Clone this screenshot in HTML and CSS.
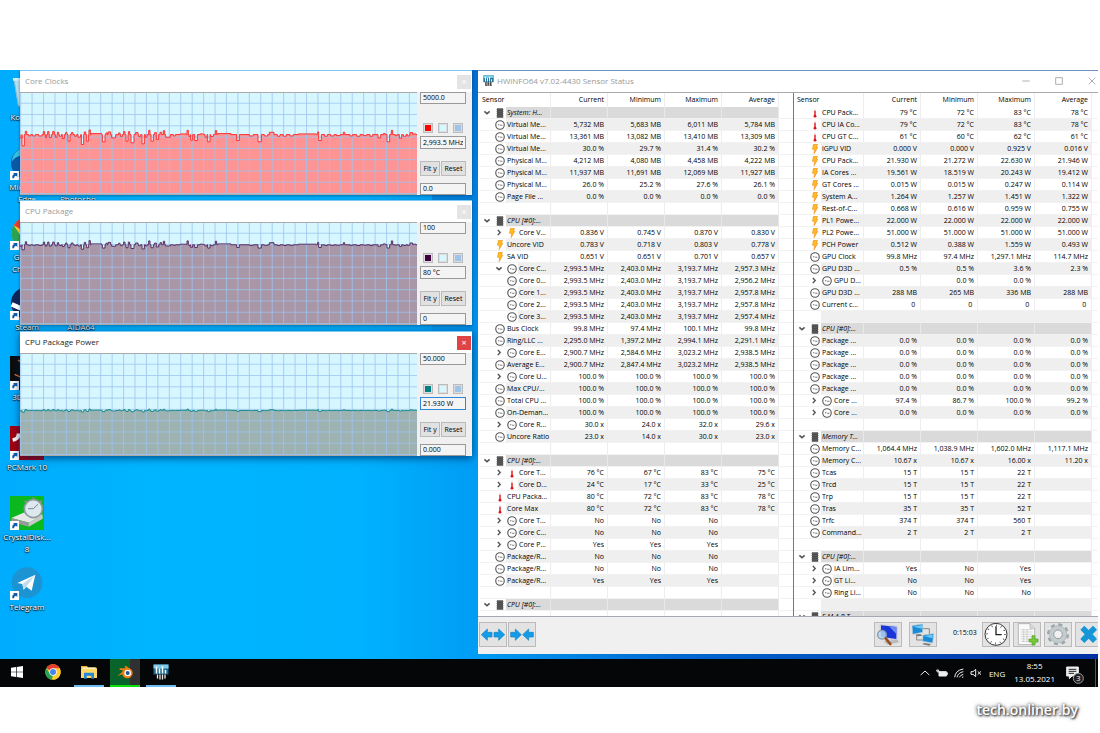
FILE: index.html
```html
<!DOCTYPE html>
<html lang="en">
<head>
  <meta charset="UTF-8">
  <title>HWiNFO64 Sensor Status</title>
  <link rel="stylesheet" href="styles.css">
</head>
<body>
  <!-- shared icons -->
  <svg class="symbols" aria-hidden="true">
    <symbol id="clock" viewBox="0 0 27 27"><circle cx="13.500" cy="13.500" r="11.500" fill="#fff" stroke="#555" stroke-width="3"/><path d="M8 13h4M14 14h6" stroke="#777" stroke-width="3"/></symbol>
    <symbol id="chip" viewBox="0 0 24 30"><path d="M3 1h18v28H3z" fill="#4a4a4a"/><path d="M1 4h22M1 10h22M1 16h22M1 22h22M1 27h22" stroke="#666" stroke-width="2"/></symbol>
    <symbol id="bolt" viewBox="0 0 20 32"><path d="M5 1h13l-4 9h5L7 31l2-14H2z" fill="#ffbe1a" stroke="#f08a1c" stroke-width="2"/></symbol>
    <symbol id="temp" viewBox="0 0 12 32"><path d="M4 2h4v20H4z" fill="#ddd"/><path d="M4 9h4v14H4z" fill="#e00"/><circle cx="6" cy="26" r="4.500" fill="#d11"/></symbol>
    <symbol id="open" viewBox="0 0 24 24"><path d="M3 8l9 8 9-8" fill="none" stroke="#555" stroke-width="5"/></symbol>
    <symbol id="closed" viewBox="0 0 24 24"><path d="M8 3l8 9-8 9" fill="none" stroke="#555" stroke-width="5"/></symbol>
    <symbol id="hwinfo" viewBox="0 0 32 32"><path d="M1 1h30v20H1z" fill="#1a6a94"/><path d="M1 1h30v8H1z" fill="#7fcbe6"/><path d="M7 5v14M13 9v10M19 5v14M25 12v7" stroke="#fff" stroke-width="3"/><path d="M6 21h20v10H6z" fill="#111"/><path d="M9 21v8M14 21v10M19 21v10M24 21v8" stroke="#eee" stroke-width="2.500"/></symbol>
    <symbol id="shortcut" viewBox="0 0 27 27"><path d="M0 0h27v27H0z" fill="#fff"/><path d="M7 22v-6q0-6 6-6l-4-4h13v12l-4-4q-6 0-6 8z" fill="#0a5bb0"/></symbol>
    <symbol id="chromeball" viewBox="0 0 48 48"><circle cx="24" cy="24" r="23" fill="#fc3"/><path d="M24 24L4 12.500A23 23 0 0 1 44 12.500z" fill="#e63e30"/><path d="M4 12.500L15 29l9 5-4 13A23 23 0 0 1 4 12.500z" fill="#2aa44f"/><path d="M24 13h20a23 23 0 0 1-20 34l10-18z" fill="#fc3"/><circle cx="24" cy="24" r="11" fill="#fff"/><circle cx="24" cy="24" r="9" fill="#4286f4"/></symbol>
  </svg>

  <main class="desktop">
    <div class="wallpaper">
      <div class="shortcuts">
        <div class="shortcut">
          <svg viewBox="0 0 102 102"><path d="M12 10h74l-11 80H25z" fill="#b4e0f0" stroke="#8bbccb" stroke-width="3"/><path d="M9 6h80v8H9z" fill="#d5edf5"/><path d="M38 65l12-20 14 20zM42 72h24" fill="#1677c7" stroke="#1677c7" stroke-width="5"/></svg>
          <span>Корзина</span>
        </div>
        <div></div>
        <div class="shortcut">
          <svg viewBox="0 0 102 102"><circle cx="51" cy="51" r="48" fill="#0a59a8"/><path d="M5 48C8 16 34 2 53 3c30 0 50 28 45 50-8 18-40 12-33 0 5-15-8-27-22-25C25 28 10 38 5 48z" fill="#35c1dc"/><use href="#shortcut" y="75" width="27" height="27"/></svg>
          <span>Microsoft Edge</span>
        </div>
        <div class="shortcut">
          <svg viewBox="0 0 102 102"><path d="M3 3h96v96H3z" fill="#001e36"/></svg>
          <span><br>Photosho...</span>
        </div>
        <div class="shortcut">
          <svg viewBox="0 0 102 102"><use href="#chromeball" x="3" y="3" width="96" height="96"/><use href="#shortcut" y="75" width="27" height="27"/></svg>
          <span>Google Chrome</span>
        </div>
        <div></div>
        <div class="shortcut">
          <svg viewBox="0 0 102 102"><circle cx="51" cy="51" r="48" fill="#102455"/><path d="M5 55l35 15 25-30" fill="none" stroke="#fff" stroke-width="14"/><use href="#shortcut" y="75" width="27" height="27"/></svg>
          <span>Steam</span>
        </div>
        <div class="shortcut">
          <svg viewBox="0 0 102 102"><path d="M3 3h96v96H3z" fill="#d33"/></svg>
          <span>AIDA64</span>
        </div>
        <div class="shortcut">
          <svg viewBox="0 0 102 102"><path d="M0 0h102v102H0z" fill="#0c0c0c"/><path d="M24 12l12 9 20-12M14 55l25 12 30-25" fill="none" stroke="#e8762b" stroke-width="4"/><use href="#shortcut" y="75" width="27" height="27"/></svg>
          <span>3DMark</span>
        </div>
        <div></div>
        <div class="shortcut">
          <svg viewBox="0 0 102 102"><path d="M0 0h102v102H0z" fill="#a3000f"/><path d="M8 42q16-3 17-14h10v50" fill="none" stroke="#fff" stroke-width="11"/><use href="#shortcut" y="75" width="27" height="27"/></svg>
          <span>PCMark 10</span>
        </div>
        <div></div>
        <div class="shortcut">
          <svg viewBox="0 0 102 102"><path d="M0 0h102v102H0z" fill="#0bb81e"/><path d="M4 66l42-18 52 8-40 24z" fill="#e8e8e8"/><path d="M4 66v12l52 14V80z" fill="#999"/><path d="M56 80v12l42-24V56z" fill="#c9c9c9"/><path d="M70 4v8M44 14l7 6M96 14l-7 6" stroke="#888" stroke-width="6"/><circle cx="70" cy="38" r="27" fill="#dce8ec" stroke="#8d999e" stroke-width="5"/><path d="M70 38l14-13M54 38h16" stroke="#789" stroke-width="3"/><use href="#shortcut" y="75" width="27" height="27"/></svg>
          <span>CrystalDisk... 8</span>
        </div>
        <div></div>
        <div class="shortcut">
          <svg viewBox="0 0 102 102"><circle cx="51" cy="50" r="46" fill="#1c93d2"/><path d="M22 51l54-25-11 48-16-12-8 9-4-17z" fill="#fff"/><path d="M37 54l39-28-27 36-8 9z" fill="#c3dcec"/><use href="#shortcut" y="75" width="27" height="27"/></svg>
          <span>Telegram</span>
        </div>
      </div>

      <!-- graph windows -->
      <section class="graph-window first">
        <header><h2>Core Clocks</h2><button class="close" aria-label="Close">×</button></header>
        <div class="graph-body">
          <svg class="graph" data-graph="clocks" viewBox="0 0 1191 306" preserveAspectRatio="none"></svg>
          <div class="graph-side">
            <input class="limit" aria-label="Maximum" value="5000.0">
            <div class="swatches"><button class="swatch red" aria-label="Line color"></button><button class="swatch pale" aria-label="Background color"></button><button class="swatch grid" aria-label="Grid color"></button></div>
            <input class="value" aria-label="Current value" value="2,993.5 MHz">
            <div class="side-buttons"><button>Fit y</button><button>Reset</button></div>
            <input class="limit" aria-label="Minimum" value="0.0">
          </div>
        </div>
      </section>
      <section class="graph-window second">
        <header><h2>CPU Package</h2><button class="close" aria-label="Close">×</button></header>
        <div class="graph-body">
          <svg class="graph" data-graph="package" viewBox="0 0 1191 306" preserveAspectRatio="none"></svg>
          <div class="graph-side">
            <input class="limit" aria-label="Maximum" value="100">
            <div class="swatches"><button class="swatch plum" aria-label="Line color"></button><button class="swatch pale" aria-label="Background color"></button><button class="swatch grid" aria-label="Grid color"></button></div>
            <input class="value" aria-label="Current value" value="80 °C">
            <div class="side-buttons"><button>Fit y</button><button>Reset</button></div>
            <input class="limit" aria-label="Minimum" value="0">
          </div>
        </div>
      </section>
      <section class="graph-window third active">
        <header><h2>CPU Package Power</h2><button class="close" aria-label="Close">×</button></header>
        <div class="graph-body">
          <svg class="graph" data-graph="power" viewBox="0 0 1191 306" preserveAspectRatio="none"></svg>
          <div class="graph-side">
            <input class="limit" aria-label="Maximum" value="50.000">
            <div class="swatches"><button class="swatch teal" aria-label="Line color"></button><button class="swatch pale" aria-label="Background color"></button><button class="swatch grid" aria-label="Grid color"></button></div>
            <input class="value" aria-label="Current value" value="21.930 W">
            <div class="side-buttons"><button>Fit y</button><button>Reset</button></div>
            <input class="limit" aria-label="Minimum" value="0.000">
          </div>
        </div>
      </section>

      <!-- sensors -->
      <section class="sensor-window">
        <header class="sensor-title">
          <svg class="app-icon"><use href="#hwinfo"/></svg>
          <h1>HWiNFO64 v7.02-4430 Sensor Status</h1>
          <div class="window-buttons">
            <button aria-label="Minimize"><svg viewBox="0 0 24 24"><path d="M1 12h22"/></svg></button>
            <button aria-label="Maximize"><svg viewBox="0 0 24 24"><path d="M2 2h20v20H2z"/></svg></button>
            <button aria-label="Close"><svg viewBox="0 0 24 24"><path d="M2 2l20 20M22 2L2 22"/></svg></button>
          </div>
        </header>
        <div class="panes">
          <div class="pane left-pane">
            <table>
              <colgroup><col class="name-col"><col class="num-col"><col class="num-col"><col class="num-col"><col class="num-col"><col></colgroup>
              <thead><tr><th>Sensor</th><th>Current</th><th>Minimum</th><th>Maximum</th><th>Average</th><td></td></tr></thead>
              <tbody id="left"></tbody>
            </table>
          </div>
          <div class="pane right-pane">
            <table>
              <colgroup><col class="name-col"><col class="num-col"><col class="num-col"><col class="num-col"><col class="num-col"><col></colgroup>
              <thead><tr><th>Sensor</th><th>Current</th><th>Minimum</th><th>Maximum</th><th>Average</th><td></td></tr></thead>
              <tbody id="right"></tbody>
            </table>
          </div>
        </div>
        <footer class="toolbar">
          <button aria-label="Expand columns"><svg viewBox="0 0 78 69"><path d="M4 35l18-17v10h14v14H22v10zM74 35L56 18v10H42v14h14v10z" fill="#159ce8" stroke="#1283c4" stroke-width="2"/></svg></button>
          <button aria-label="Shrink columns"><svg viewBox="0 0 78 69"><path d="M37 35L19 18v10H5v14h14v10zM41 35l18-17v10h14v14H59v10z" fill="#159ce8" stroke="#1283c4" stroke-width="2"/></svg></button>
          <div class="tools">
            <button aria-label="Summary"><svg viewBox="0 0 78 69"><path d="M14 3l54 5v46l-54-9z" fill="#ccd"/><path d="M18 7l46 5v36l-46-7z" fill="#1937d8"/><path d="M42 10l22 3v20z" fill="#6e8cf5"/><path d="M25 54l42-4 6 8-36 7z" fill="#bbb"/><circle cx="21" cy="35" r="13" fill="#b5d8f5" fill-opacity=".85" stroke="#8498ab" stroke-width="4"/><path d="M32 46l14 17" stroke="#9a4d20" stroke-width="8" stroke-linecap="round"/></svg></button>
            <button class="network" aria-label="Network"><svg viewBox="0 0 78 69"><path d="M34 17h24v18M20 35v16h22" fill="none" stroke="#888" stroke-width="3"/><path d="M6 8l32-5v25L8 34zM39 36l32-4-3 28-30-5z" fill="#168bd8" stroke="#b9c8d4" stroke-width="2"/><path d="M10 11l26-5v11zM42 39l26-4-1 11z" fill="#70c8f5"/><path d="M16 35l15-2 6 5-14 2zM41 60l22 3-5 5-20-4z" fill="#777"/></svg></button>
            <time>0:15:03</time>
            <button aria-label="Reset time"><svg viewBox="0 0 78 69"><circle cx="39" cy="34" r="33" fill="#fff" stroke="#333" stroke-width="3"/><circle cx="39" cy="34" r="27" fill="none" stroke="#222" stroke-width="5" stroke-dasharray="2 12.137"/><path d="M39 10v25h17" fill="none" stroke="#222" stroke-width="4"/></svg></button>
            <button aria-label="Log"><svg viewBox="0 0 78 69"><path d="M13 2h35l14 14v49H13z" fill="#fafafa" stroke="#999" stroke-width="2"/><path d="M48 2v14h14" fill="#ddd" stroke="#aaa" stroke-width="2"/><path d="M20 20h36M20 27h36M20 34h36M20 41h36M20 48h25M20 55h25M29 18v40M39 18v40" stroke="#c4c4c4" stroke-width="2"/><path d="M54 38h9v10h9v9h-9v9h-9v-9h-9v-9h9z" fill="#78c83c" stroke="#4b9a25" stroke-width="2"/></svg></button>
            <button aria-label="Settings"><svg viewBox="0 0 78 69"><circle cx="39" cy="34" r="29" fill="none" stroke="#9ba5aa" stroke-width="8" stroke-dasharray="12 10.777"/><circle cx="39" cy="34" r="20" fill="none" stroke="#c5cccf" stroke-width="13"/><circle cx="39" cy="34" r="26" fill="none" stroke="#a9b2b6" stroke-width="2"/><circle cx="39" cy="34" r="13" fill="#f0f0f0" stroke="#8f999e" stroke-width="3"/></svg></button>
            <button aria-label="Close sensors"><svg viewBox="0 0 78 69"><path d="M13 20l12-12 13 13L51 8l12 12-13 14 13 14-12 12-13-13-13 13-12-12 13-14z" fill="#1696d6"/></svg></button>
          </div>
        </footer>
      </section>
    </div>

    <nav class="taskbar">
      <button aria-label="Start"><svg viewBox="0 0 48 48"><path d="M6 11l15-2v14H6zM23 9l19-3v17H23zM6 25h15v14L6 37zM23 25h19v17l-19-3z" fill="#fff"/></svg></button>
      <button aria-label="Chrome"><svg viewBox="0 0 48 48"><use href="#chromeball"/></svg></button>
      <button class="running" aria-label="Explorer"><svg viewBox="0 0 48 48"><path d="M0 6h18l4 5h26v31H0z" fill="#f0b52e"/><path d="M4 10h40v6H4z" fill="#fff3bc"/><path d="M0 15h48v27H0z" fill="#ffd968"/><path d="M9 26h30v18H31v-9H17v9H9z" fill="#2588d8"/></svg></button>
      <button class="running blender" aria-label="Blender"><svg viewBox="0 0 48 48"><path d="M1 36l22-18H8v-5h20l-6-5 5-3 18 15z" fill="#ee7d16"/><circle cx="31" cy="27" r="16" fill="#ee7d16"/><circle cx="32" cy="27" r="10" fill="#fff"/><circle cx="32" cy="27" r="6" fill="#24568c"/></svg></button>
      <button class="running" aria-label="HWiNFO"><svg viewBox="0 0 48 48"><use href="#hwinfo"/></svg></button>
      <div class="tray">
        <svg viewBox="0 0 36 30"><path d="M5 21l13-12 13 12"/></svg>
        <svg viewBox="0 0 36 30"><path class="solid" d="M9 11h22v3h3v6h-3v4H9z"/><path d="M2 6h6v6H4z"/></svg>
        <svg viewBox="0 0 36 30"><path d="M5 28Q7 7 31 3M12 28q3-14 19-17M19 28q3-7 12-9M27 28l4-1"/></svg>
        <svg viewBox="0 0 36 30"><path d="M3 11h6l8-7v22l-8-7H3zM23 10l10 10M33 10L23 20"/></svg>
        <span class="lang">ENG</span>
        <div class="date"><time>8:55</time><time>13.05.2021</time></div>
        <svg class="notices" viewBox="0 0 54 54"><path class="solid" d="M2 3h35v27H18l-8 8v-8H2z"/><path class="dark" d="M8 10h23M8 16h23M8 22h16"/><circle cx="37" cy="37" r="15" fill="#222" stroke="#999"/><text x="37" y="45">3</text></svg>
      </div>
    </nav>
  </main>
  <div class="watermark">tech.onliner.by</div>
  <script src="app.js"></script>
</body>
</html>
```
FILE: styles.css
```css
* {
  box-sizing: border-box;
}
body {
  margin: 0;
  height: 100vh;
  padding: 70px 2px 0 0;
  display: flex;
  flex-direction: column;
  overflow: hidden;
  background: #fff;
  font-family: "Open Sans", "Noto Sans", sans-serif;
  font-size: 8px;
  color: #000;
}
h1, h2 {
  margin: 0;
  font-size: 8px;
  font-weight: 400;
}
button, input {
  font: inherit;
  font-size: 7px;
  color: #000;
  padding: 0;
  margin: 0;
}
svg {
  display: block;
}
.symbols {
  position: absolute;
  width: 0;
  height: 0;
}

/* Desktop */
.desktop {
  flex: 1;
  min-height: 0;
  display: flex;
  flex-direction: column;
}
.wallpaper {
  flex: 1;
  min-height: 0;
  position: relative;
  overflow: hidden;
  background:
    linear-gradient(190deg, rgba(0, 90, 190, 0.7) 0%, rgba(0, 110, 210, 0) 55%) 432px 0 / 50px 100% no-repeat,
    linear-gradient(90deg, #00acfd 0%, #00b5ff 14%, #00b2ff 33%, #009df4 43%, #0067d0 62%, #0030a4 100%);
}
.shortcuts {
  display: grid;
  grid-template-columns: 54px 54px;
  grid-auto-rows: 70px;
  padding-top: 6px;
}
.shortcut {
  display: flex;
  flex-direction: column;
  align-items: center;
  gap: 1px;
  text-align: center;
  line-height: 12px;
  color: #fff;
  text-shadow: 0 1px 1px #000, 0 0 2px #000;
}
.shortcut svg {
  width: 34px;
  height: 34px;
  flex: none;
}

/* Graph windows */
.graph-window {
  position: absolute;
  left: 20px;
  width: 452px;
  background: #f0f0f0;
  border-top: 1px solid #7cc8f5;
  box-shadow: 0 1px 3px rgba(0, 40, 90, 0.5);
}
.first {
  top: 0;
}
.second {
  top: 130px;
}
.third {
  top: 261px;
}
.graph-window header {
  height: 21px;
  padding: 0 1px 0 5px;
  display: flex;
  align-items: center;
  justify-content: space-between;
  background: #fff;
  color: #999;
}
.graph-window h2 {
  padding-bottom: 2px;
}
.active.graph-window {
  box-shadow: 0 2px 8px rgba(0, 30, 80, 0.7);
}
.active.graph-window header {
  color: #222;
}
.close {
  width: 14px;
  height: 14px;
  border: 0;
  background: #e4e4e4;
  color: #fff;
  font-size: 9px;
  line-height: 12px;
}
.active .close {
  background: #e04343;
}
.graph-body {
  display: flex;
  height: 103px;
}
.graph {
  flex: 1;
  min-width: 0;
  height: 103px;
  background: #d6f7ff;
  border: 1px solid #aaa;
  border-width: 1px 0;
}
.graph-side {
  width: 55px;
  padding: 0 6px 0 3px;
  display: flex;
  flex-direction: column;
}
.graph-side input {
  width: 46px;
  height: 12px;
  border: 1px solid #999;
  background: #f4f4f4;
  padding: 0 2px 1px;
}
.graph-side .value {
  height: 13px;
  margin-bottom: 12px;
}
.active .value {
  border-color: #2e86d8;
}
.swatches {
  display: flex;
  gap: 5px;
  padding: 0 3px;
  margin: 19px 0 3px;
}
.swatch {
  width: 10px;
  height: 10px;
  border: 2px solid #ddd;
  outline: 1px solid #bbb;
  outline-offset: -1px;
}
.red {
  background: #f00;
}
.plum {
  background: #400040;
}
.teal {
  background: #008080;
}
.pale {
  background: #d6f7ff;
}
.grid {
  background: #9fc4ec;
}
.side-buttons {
  display: flex;
  gap: 1px;
  margin-bottom: 7px;
}
.side-buttons button {
  flex: 1 0 auto;
  height: 15px;
  border: 1px solid #bbb;
  background: #e1e1e1;
}

/* Sensor window */
.sensor-window {
  position: absolute;
  top: 0;
  bottom: 5px;
  left: 478px;
  right: 0;
  display: flex;
  flex-direction: column;
  overflow: hidden;
  background: #fff;
  border-top: 1px solid #6c95c4;
}
.sensor-title {
  height: 22px;
  flex: none;
  display: flex;
  align-items: center;
  gap: 3px;
  padding: 0 0 2px 5px;
  color: #999;
  border-bottom: 1px solid #aaa;
}
.app-icon {
  width: 11px;
  height: 11px;
}
.window-buttons {
  display: flex;
  gap: 25px;
  margin-left: auto;
  padding-right: 2px;
}
.window-buttons button {
  width: 8px;
  height: 8px;
  border: 0;
  background: none;
}
.window-buttons path {
  fill: none;
  stroke: #888;
  stroke-width: 2;
}
.panes {
  flex: 1;
  min-height: 0;
  display: flex;
  border-bottom: 1px solid #a4a9b2;
}
.pane {
  overflow: hidden;
  padding-left: 1px;
}
.left-pane {
  width: 315px;
}
.right-pane {
  flex: 1;
  border-left: 1px solid #777;
  padding-left: 0;
}
table {
  width: 100%;
  table-layout: fixed;
  border-collapse: separate;
  border-spacing: 0;
  font-size: 7px;
  line-height: 11px;
}
.name-col {
  width: 72px;
}
.right-pane .name-col {
  width: 70px;
}
.num-col {
  width: 57px;
}
th, td {
  height: 12px;
  padding: 0 3px 0 0;
  border-right: 1px solid #eee;
  border-bottom: 1px solid #f2f2f2;
  text-align: right;
  white-space: nowrap;
  overflow: hidden;
}
thead th, thead td {
  height: 14px;
  font-weight: 400;
  border-bottom: 0;
}
thead th {
  padding-bottom: 1px;
}
thead th:first-child {
  text-align: left;
  padding-left: 3px;
}
tbody td:first-child {
  padding: 0 0 0 3px;
  text-align: left;
}
tr td:last-child {
  border-right: 0;
  background: #fff;
}
.odd td {
  background: #efefef;
}
.odd td:first-child {
  background: #fff;
}
.group td {
  background: #dadada;
  border-right-color: #e8e8e8;
}
.group td:first-child {
  background: #fff;
}
.group td:last-child, .odd td:last-child {
  background: #fff;
}
.name {
  display: flex;
  height: 11px;
}
.name svg {
  width: 12px;
  height: 11px;
  flex: none;
}
.name .slot {
  width: 12px;
  flex: none;
}
.name .arrow {
  padding: 2px 3px 2px 1px;
}
.name .icon {
  padding: 1px 1px 0 1px;
}
.label {
  flex: 1;
  padding-left: 1px;
}
.odd .label {
  background: #efefef;
}
.group .label {
  background: #dadada;
  font-style: italic;
}

/* Bottom toolbar */
.toolbar {
  height: 37px;
  flex: none;
  display: flex;
  gap: 1px;
  padding: 5px 0 0 1px;
  background: #f0f0f0;
}
.toolbar button {
  width: 28px;
  height: 25px;
  flex: none;
  border: 1px solid #bbb;
  background: #e3e3e3;
}
.toolbar svg {
  width: 26px;
  height: 23px;
}
.tools {
  display: flex;
  gap: 3px;
  margin-left: auto;
  margin-right: -5px;
}
.tools .network {
  margin: 0 13px 0 4px;
}
.tools time {
  width: 26px;
  line-height: 22px;
  font-size: 7px;
}

/* Taskbar */
.taskbar {
  height: 28px;
  flex: none;
  display: flex;
  gap: 6px;
  padding-left: 2px;
  background: #050607;
}
.taskbar button {
  width: 30px;
  border: 0;
  border-bottom: 2px solid transparent;
  background: none;
  display: flex;
  align-items: center;
  justify-content: center;
}
.taskbar button svg {
  width: 16px;
  height: 16px;
}
.taskbar .running {
  border-bottom-color: #6cbcf0;
}
.taskbar .blender {
  background: linear-gradient(90deg, #08642a 66%, #303030 66%);
  border-bottom-color: #0be00b;
}
.tray {
  display: flex;
  align-items: center;
  gap: 5px;
  margin-left: auto;
  margin-right: 2px;
  padding-right: 11px;
  border-right: 1px solid #555;
  color: #fff;
}
.tray svg {
  width: 12px;
  height: 10px;
  fill: none;
  stroke: #eee;
  stroke-width: 3;
}
.tray .solid {
  fill: #eee;
}
.tray .dark {
  stroke: #222;
}
.lang {
  padding: 0 4px 0 2px;
}
.date {
  display: flex;
  flex-direction: column;
  align-items: center;
  line-height: 13px;
  padding-bottom: 2px;
}
.tray .notices {
  width: 18px;
  height: 18px;
  margin: 3px 0 0 6px;
}
.notices text {
  font-size: 22px;
  text-anchor: middle;
  fill: #fff;
  stroke: none;
}
.watermark {
  height: 46px;
  flex: none;
  padding-right: 20px;
  text-align: right;
  font-size: 14px;
  font-weight: 600;
  line-height: 45px;
  color: #fff;
  text-shadow: 1px 1px 2px #333, 0 0 3px #555, 0 0 5px #777;
}
```
FILE: app.js
```js
// kind|level|arrow|name|current|minimum|maximum|average
// kinds: g = group, c = clock, b = bolt, t = temperature, - = blank row
const left = `g|0|v|System: H...
c|0||Virtual Me...|5,732 MB|5,683 MB|6,011 MB|5,784 MB
c|0||Virtual Me...|13,361 MB|13,082 MB|13,410 MB|13,309 MB
c|0||Virtual Me...|30.0 %|29.7 %|31.4 %|30.2 %
c|0||Physical M...|4,212 MB|4,080 MB|4,458 MB|4,222 MB
c|0||Physical M...|11,937 MB|11,691 MB|12,069 MB|11,927 MB
c|0||Physical M...|26.0 %|25.2 %|27.6 %|26.1 %
c|0||Page File ...|0.0 %|0.0 %|0.0 %|0.0 %
-
g|0|v|CPU [#0]:...
b|1|>|Core V...|0.836 V|0.745 V|0.870 V|0.830 V
b|0||Uncore VID|0.783 V|0.718 V|0.803 V|0.778 V
b|0||SA VID|0.651 V|0.651 V|0.701 V|0.657 V
c|1|v|Core C...|2,993.5 MHz|2,403.0 MHz|3,193.7 MHz|2,957.3 MHz
c|1||Core 0...|2,993.5 MHz|2,403.0 MHz|3,193.7 MHz|2,956.2 MHz
c|1||Core 1...|2,993.5 MHz|2,403.0 MHz|3,193.7 MHz|2,957.8 MHz
c|1||Core 2...|2,993.5 MHz|2,403.0 MHz|3,193.7 MHz|2,957.8 MHz
c|1||Core 3...|2,993.5 MHz|2,403.0 MHz|3,193.7 MHz|2,957.4 MHz
c|0||Bus Clock|99.8 MHz|97.4 MHz|100.1 MHz|99.8 MHz
c|0||Ring/LLC ...|2,295.0 MHz|1,397.2 MHz|2,994.1 MHz|2,291.1 MHz
c|1|>|Core E...|2,900.7 MHz|2,584.6 MHz|3,023.2 MHz|2,938.5 MHz
c|0||Average E...|2,900.7 MHz|2,847.4 MHz|3,023.2 MHz|2,938.5 MHz
c|1|>|Core U...|100.0 %|100.0 %|100.0 %|100.0 %
c|0||Max CPU/...|100.0 %|100.0 %|100.0 %|100.0 %
c|0||Total CPU ...|100.0 %|100.0 %|100.0 %|100.0 %
c|0||On-Deman...|100.0 %|100.0 %|100.0 %|100.0 %
c|1|>|Core R...|30.0 x|24.0 x|32.0 x|29.6 x
c|0||Uncore Ratio|23.0 x|14.0 x|30.0 x|23.0 x
-
g|0|v|CPU [#0]:...
t|1|>|Core T...|76 °C|67 °C|83 °C|75 °C
t|1|>|Core D...|24 °C|17 °C|33 °C|25 °C
t|0||CPU Packa...|80 °C|72 °C|83 °C|78 °C
t|0||Core Max|80 °C|72 °C|83 °C|78 °C
c|1|>|Core T...|No|No|No|
c|1|>|Core C...|No|No|No|
c|1|>|Core P...|Yes|Yes|Yes|
c|0||Package/R...|No|No|No|
c|0||Package/R...|No|No|No|
c|0||Package/R...|Yes|Yes|Yes|
-
g|0|v|CPU [#0]:...
-`;

const right = `t|0||CPU Pack...|79 °C|72 °C|83 °C|78 °C
t|0||CPU IA Co...|79 °C|72 °C|83 °C|78 °C
t|0||CPU GT C...|61 °C|60 °C|62 °C|61 °C
b|0||iGPU VID|0.000 V|0.000 V|0.925 V|0.016 V
b|0||CPU Pack...|21.930 W|21.272 W|22.630 W|21.946 W
b|0||IA Cores ...|19.561 W|18.519 W|20.243 W|19.412 W
b|0||GT Cores ...|0.015 W|0.015 W|0.247 W|0.114 W
b|0||System A...|1.264 W|1.257 W|1.451 W|1.322 W
b|0||Rest-of-C...|0.668 W|0.616 W|0.959 W|0.755 W
b|0||PL1 Powe...|22.000 W|22.000 W|22.000 W|22.000 W
b|0||PL2 Powe...|51.000 W|51.000 W|51.000 W|51.000 W
b|0||PCH Power|0.512 W|0.388 W|1.559 W|0.493 W
c|0||GPU Clock|99.8 MHz|97.4 MHz|1,297.1 MHz|114.7 MHz
c|0||GPU D3D ...|0.5 %|0.5 %|3.6 %|2.3 %
c|1|>|GPU D...||0.0 %|0.0 %|
c|0||GPU D3D ...|288 MB|265 MB|336 MB|288 MB
c|0||Current c...|0&nbsp;|0&nbsp;|0&nbsp;|0&nbsp;
-
g|0|v|CPU [#0]:...
c|0||Package ...|0.0 %|0.0 %|0.0 %|0.0 %
c|0||Package ...|0.0 %|0.0 %|0.0 %|0.0 %
c|0||Package ...|0.0 %|0.0 %|0.0 %|0.0 %
c|0||Package ...|0.0 %|0.0 %|0.0 %|0.0 %
c|0||Package ...|0.0 %|0.0 %|0.0 %|0.0 %
c|1|>|Core ...|97.4 %|86.7 %|100.0 %|99.2 %
c|1|>|Core ...|0.0 %|0.0 %|0.0 %|0.0 %
-
g|0|v|Memory T...
c|0||Memory C...|1,064.4 MHz|1,038.9 MHz|1,602.0 MHz|1,117.1 MHz
c|0||Memory C...|10.67 x|10.67 x|16.00 x|11.20 x
c|0||Tcas|15 T|15 T|22 T|
c|0||Trcd|15 T|15 T|22 T|
c|0||Trp|15 T|15 T|22 T|
c|0||Tras|35 T|35 T|52 T|
c|0||Trfc|374 T|374 T|560 T|
c|0||Command...|2 T|2 T|2 T|
-
g|0|v|CPU [#0]:...
c|1|>|IA Lim...|Yes|No|Yes|
c|1|>|GT Li...|No|No|Yes|
c|1|>|Ring Li...|No|No|No|
-
g|0|v|S.M.A.R.T...`;

const icons = { g: "chip", c: "clock", b: "bolt", t: "temp" };
const slot = '<span class="slot"></span>';

function fillTable(id, text) {
  document.getElementById(id).innerHTML = text.split("\n").map((line, i) => {
    const [kind, level, arrow, name, ...nums] = line.split("|");
    const rowClass = kind === "g" ? "group" : i % 2 ? "odd" : "";
    let cell = slot + slot + '<span class="label"></span>';
    if (kind !== "-") {
      cell = (level === "1" ? slot : "")
        + (arrow ? `<svg class="arrow"><use href="#${arrow === "v" ? "open" : "closed"}"/></svg>` : slot)
        + `<svg class="icon"><use href="#${icons[kind]}"/></svg><span class="label">${name}</span>`;
    }
    const cells = [0, 1, 2, 3].map(n => `<td>${nums[n] || ""}</td>`).join("");
    return `<tr class="${rowClass}"><td><div class="name">${cell}</div></td>${cells}<td></td></tr>`;
  }).join("");
}
fillTable("left", left);
fillTable("right", right);

// [x, width, offset from the base line]
const spikes = [
  [0, 6, 10], [6, 7, 34], [16, 4, -10], [26, 6, 4], [38, 8, 4], [56, 10, 4], [70, 4, -9], [76, 4, 9],
  [83, 4, -9], [88, 6, 9], [98, 5, -9], [106, 5, 8], [112, 4, -7], [118, 6, 5], [127, 6, 12], [137, 4, -6],
  [144, 6, 20], [154, 5, -6], [164, 6, 5], [174, 8, 8], [184, 7, 30], [193, 4, -8], [200, 6, 20], [207, 4, -14],
  [213, 32, -3], [247, 8, 22], [258, 4, -5], [264, 8, -8], [275, 12, 10], [296, 4, -5], [302, 5, 6], [311, 4, -9],
  [318, 6, 20], [325, 4, -9], [333, 9, 25], [347, 7, -6], [356, 6, 6], [366, 7, 28], [376, 5, 8], [386, 4, -13],
  [393, 7, 20], [404, 5, -6], [409, 7, 15], [420, 5, -7], [430, 4, -12], [437, 14, 8], [460, 6, 4], [480, 20, -2],
  [501, 4, -13], [507, 5, 6], [512, 6, 17], [524, 8, 18], [540, 10, -2], [555, 6, 8], [563, 7, 22], [572, 8, 6],
  [586, 4, -12], [593, 40, -3], [650, 8, 18], [688, 12, 4], [714, 10, 22], [733, 10, 4], [748, 14, -7],
  [772, 8, 5], [790, 9, 5], [810, 10, 4], [835, 54, -2], [893, 3, -8], [896, 8, 18], [914, 8, 5],
  [932, 10, 4], [949, 12, 3], [970, 4, -7], [990, 8, 4], [1010, 10, 5], [1030, 10, 3], [1050, 8, 5],
  [1074, 8, 10], [1090, 6, -3], [1101, 8, 22], [1114, 4, -13], [1126, 5, 3], [1138, 7, 11], [1150, 8, 5],
  [1163, 6, 4], [1170, 8, -6], [1180, 8, -2]
];
const graphs = {
  clocks: { base: 126, up: 1, down: 1, line: "#ff3030", fill: "#ff9494" },
  package: { base: 66, up: 0.9, down: 0.45, line: "#5b2b60", fill: "#a996a6" },
  power: { base: 171, up: 0.3, down: 0.16, line: "#178a86", fill: "#9eb3b1" }
};

document.querySelectorAll(".graph").forEach(svg => {
  const g = graphs[svg.dataset.graph];
  let line = `M0 ${g.base}`;
  spikes.forEach(([x, w, dy]) => {
    const y = g.base + dy * (dy < 0 ? g.up : g.down);
    line += `H${x}V${y}H${x + w}V${g.base}`;
  });
  line += "H1191";
  let grid = "";
  for (let x = 2; x < 1191; x += 34.3) grid += `M${x} 0V306`;
  for (let y = 31; y < 306; y += 34.2) grid += `M0 ${y}H1191`;
  svg.innerHTML = `<path d="${line}V306H0z" fill="${g.fill}"/>
    <path d="${grid}" stroke="#9cc4ee" stroke-width="3" stroke-opacity="0.8" fill="none"/>
    <path d="${line}" stroke="${g.line}" stroke-width="3" fill="none"/>`;
});
```
